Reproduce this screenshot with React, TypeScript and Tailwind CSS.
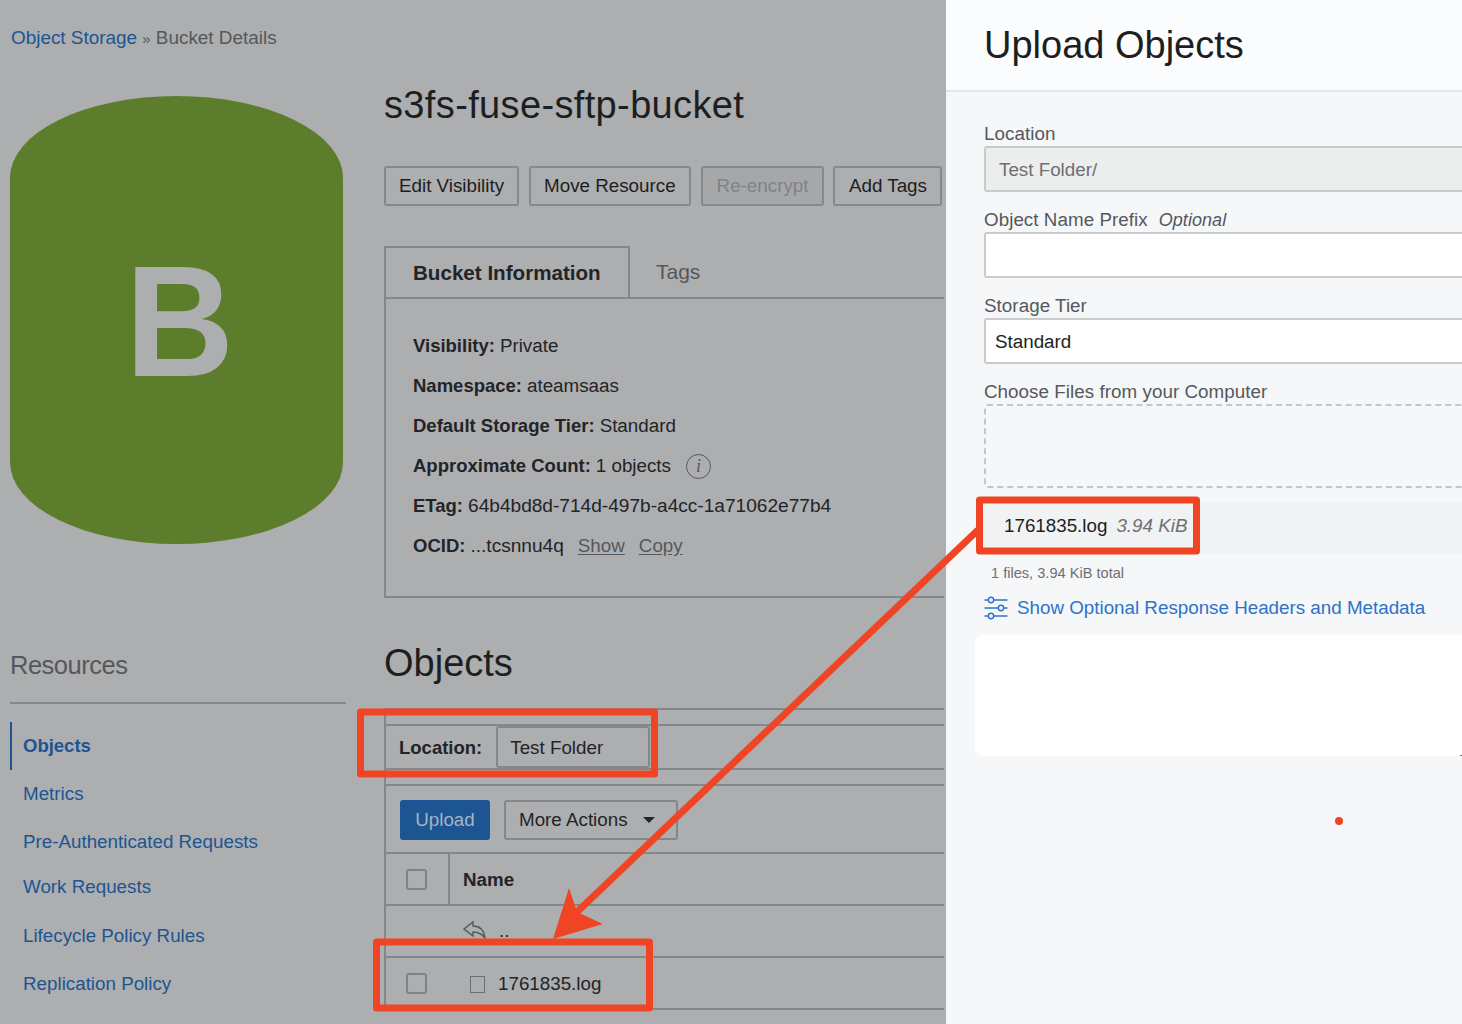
import React from 'react';

const resources = [
  { label: 'Metrics', rowClass: 'h-12' },
  { label: 'Pre-Authenticated Requests', rowClass: 'h-[47px] pt-[2px]' },
  { label: 'Work Requests', rowClass: 'h-[47px] pb-[2px]' },
  { label: 'Lifecycle Policy Rules', rowClass: 'h-12' },
  { label: 'Replication Policy', rowClass: 'h-12' },
  { label: 'Retention Rules', rowClass: 'h-12' },
];

const infoRows = [
  { label: 'Visibility:', value: 'Private' },
  { label: 'Namespace:', value: 'ateamsaas' },
  { label: 'Default Storage Tier:', value: 'Standard' },
];

function ActionButton({ label, disabled, wide }: { label: string; disabled?: boolean; wide?: boolean }) {
  if (disabled) {
    return (
      <button
        type="button"
        className="h-10 shrink-0 rounded-[3px] border-2 border-[#83898e] bg-[#a6a7a9] px-[14px] text-[18.8px] whitespace-nowrap text-[#808285]"
      >
        {label}
      </button>
    );
  }
  return (
    <button
      type="button"
      className={
        wide
          ? '-ml-[1px] h-10 shrink-0 rounded-[3px] border-2 border-[#83898e] px-[13.5px] text-[18.8px] whitespace-nowrap text-[#1d1e20]'
          : 'h-10 shrink-0 rounded-[3px] border-2 border-[#83898e] px-[13px] text-[18.8px] whitespace-nowrap text-[#1d1e20]'
      }
    >
      {label}
    </button>
  );
}

function Sidebar() {
  return (
    <aside className="flex w-[346px] shrink-0 flex-col">
      <div className="mt-[96px] ml-[10px] flex h-[448px] w-[333px] items-center justify-center rounded-[167px/82px] bg-[#5c7d2b] pt-[3px] pl-[6px]">
        <span className="scale-x-[0.96] text-[157px] leading-none font-bold text-[#adaeb0]">B</span>
      </div>
      <h2 className="mt-[103px] ml-[10px] text-[25.5px] leading-9 font-light tracking-[-0.5px] text-[#55585b]">Resources</h2>
      <div className="mt-[19px] ml-[10px] h-[2px] bg-[#85898d]" />
      <nav className="mt-[18px] ml-[10px] flex flex-col text-[18.8px] text-[#1c5592]">
        <a className="flex h-12 items-center border-l-2 border-[#1c5592] pl-[11px] text-[18.5px] font-bold">Objects</a>
        {resources.map((item) => (
          <a key={item.label} className={`flex items-center pl-[13px] ${item.rowClass}`}>
            {item.label}
          </a>
        ))}
      </nav>
    </aside>
  );
}

function BucketInfo() {
  return (
    <div className="flex flex-col">
      <div className="flex h-[53px]">
        <div className="flex w-[246px] items-center border-2 border-[#83888c] pt-[2px] pl-[27px] text-[20.6px] font-bold text-[#232427]">
          Bucket Information
        </div>
        <div className="flex flex-1 items-center border-b-2 border-[#83888c] pl-[26px] text-[21px] text-[#55585b]">Tags</div>
      </div>
      <div className="flex h-[299px] flex-col border-b-2 border-l-2 border-[#83888c] pt-[27px] pl-[27px] text-[18.8px] text-[#232427]">
        {infoRows.map((row) => (
          <p key={row.label} className="flex h-10 items-center gap-[5px]">
            <b className="text-[18.5px]">{row.label}</b> {row.value}
          </p>
        ))}
        <p className="flex h-10 items-center gap-[5px]">
          <b className="text-[18.5px]">Approximate Count:</b> 1 objects
          <span className="ml-[10px] flex h-[25px] w-[25px] items-center justify-center rounded-full border border-[#55585b] font-['Liberation_Serif',serif] text-[18px] italic text-[#55585b]">
            i
          </span>
        </p>
        <p className="flex h-10 items-center gap-[5px]">
          <b className="text-[18.5px]">ETag:</b> <span className="text-[19.1px]">64b4bd8d-714d-497b-a4cc-1a71062e77b4</span>
        </p>
        <p className="flex h-10 items-center gap-[5px]">
          <b className="text-[18.5px]">OCID:</b> <span className="text-[19.1px]">...tcsnnu4q</span>
          <a className="ml-[9px] text-[#55585b] underline underline-offset-2">Show</a>
          <a className="ml-[9px] text-[#55585b] underline underline-offset-2">Copy</a>
        </p>
      </div>
    </div>
  );
}

function ObjectsTable() {
  return (
    <div className="mt-[23px] flex flex-col border-l-2 border-[#83888c] text-[18.8px] text-[#232427]">
      <div className="h-4 border-t-2 border-[#83888c]" />
      <div className="flex h-[46px] items-stretch border-y-2 border-[#83888c] pl-[13px]">
        <b className="self-center pt-[2px] text-[18.5px]">Location:</b>
        <div className="ml-[14px] flex w-[154px] items-center rounded-[3px] border-2 border-[#83888c] pt-[2px] pl-[12px]">Test Folder</div>
      </div>
      <div className="h-[14px]" />
      <div className="flex h-[70px] items-center gap-[14px] border-y-2 border-[#83888c] pt-[2px] pl-[14px]">
        <button type="button" className="h-10 w-[90px] rounded-[3px] bg-[#1c5592] text-[#a4b4c6]">
          Upload
        </button>
        <button type="button" className="flex h-10 w-[174px] items-center rounded-[3px] border-2 border-[#83888c] pl-[13px]">
          More Actions
          <span className="ml-[15px] h-0 w-0 border-x-[6px] border-t-[6px] border-x-transparent border-t-[#232427]" />
        </button>
      </div>
      <div className="flex h-[52px] items-stretch border-b-2 border-[#83888c]">
        <div className="flex w-[64px] items-center border-r-2 border-[#83888c] pl-[20px]">
          <span className="h-[21px] w-[21px] rounded-[3px] border-2 border-[#7d8286]" />
        </div>
        <b className="self-center pt-[2px] pl-[13px] text-[18.8px]">Name</b>
      </div>
      <div className="relative flex h-[52px] items-center border-b-2 border-[#83888c] pl-[113px]">
        <svg className="absolute top-[14px] left-[76px]" width="26" height="22" viewBox="0 0 26 22" fill="none" stroke="#55585b" strokeWidth="1.4">
          <path d="M2 9 L11 2 V6 C18 6 22 10 23 18 C20 14 16 12 11 12 V16 Z" />
        </svg>
        <span>..</span>
      </div>
      <div className="flex h-[52px] items-center border-b-2 border-[#83888c] pl-[20px]">
        <span className="h-[21px] w-[21px] rounded-[3px] border-2 border-[#7d8286]" />
        <span className="mt-[2px] ml-[43px] h-[17px] w-[15px] border border-[#6d7073]" />
        <span className="ml-[13px] pt-[2px]">1761835.log</span>
      </div>
    </div>
  );
}

function BucketDetails() {
  return (
    <div className="relative h-full w-[946px] shrink-0 overflow-hidden bg-[#adaeb0] font-['Liberation_Sans',Arial,sans-serif]">
      <p className="absolute top-[26px] left-[11px] text-[18.9px] leading-6 text-[#55585b]">
        <a className="text-[#1c5592]">Object Storage</a> <span className="text-[15px]">»</span> Bucket Details
      </p>
      <div className="flex">
        <Sidebar />
        <main className="ml-[38px] flex w-[560px] shrink-0 flex-col">
          <h1 className="mt-[83px] text-[38px] leading-[44px] tracking-[0.36px] text-[#1d1e20]">s3fs-fuse-sftp-bucket</h1>
          <div className="mt-[39px] flex gap-[10px]">
            <ActionButton label="Edit Visibility" />
            <ActionButton label="Move Resource" />
            <ActionButton label="Re-encrypt" disabled />
            <ActionButton label="Add Tags" wide />
          </div>
          <div className="mt-[40px]">
            <BucketInfo />
          </div>
          <h2 className="mt-[43px] text-[38px] leading-[44px] text-[#1d1e20]">Objects</h2>
          <ObjectsTable />
        </main>
      </div>
    </div>
  );
}

function Field({ label, hint, children }: { label: string; hint?: string; children: React.ReactNode }) {
  return (
    <div className="flex flex-col">
      <label className="h-[24px] text-[18.8px] leading-[24px] tracking-[0.05px] text-[#55585c]">
        {label}
        {hint ? <i className="ml-[11px] text-[18px]">{hint}</i> : null}
      </label>
      {children}
    </div>
  );
}

function UploadPanel() {
  return (
    <section className="relative h-full flex-1 overflow-hidden bg-[#f5f7f9] font-['Liberation_Sans',Arial,sans-serif]">
      <header className="flex h-[92px] items-start border-b-2 border-[#e3e5e8] bg-[#fbfcfd] pt-[23px] pl-[38px]">
        <h2 className="text-[38px] leading-[44px] text-[#1d1e20]">Upload Objects</h2>
      </header>
      <div className="flex flex-col pt-[30px] pl-[38px]">
        <Field label="Location">
          <div className="flex h-[46px] w-[600px] items-center rounded-l-[3px] border-2 border-[#c8cacc] bg-[#eceded] pt-[2px] pl-[13px] text-[18.8px] text-[#6d7073]">
            Test Folder/
          </div>
        </Field>
        <div className="mt-[16px]">
          <Field label="Object Name Prefix" hint="Optional">
            <div className="h-[46px] w-[600px] rounded-l-[3px] border-2 border-[#c8cacc] bg-white" />
          </Field>
        </div>
        <div className="mt-[16px]">
          <Field label="Storage Tier">
            <div className="flex h-[46px] w-[600px] items-center rounded-l-[3px] border-2 border-[#c8cacc] bg-white pt-[2px] pl-[9px] text-[18.8px] text-[#1d1e20]">
              Standard
            </div>
          </Field>
        </div>
        <div className="mt-[16px]">
          <Field label="Choose Files from your Computer">
            <div className="h-[84px] w-[600px] rounded-[3px] border-2 border-dashed border-[#c4c6c9]" />
          </Field>
        </div>
      </div>
      <div className="mt-[14px] ml-[32px] flex h-[52px] items-center bg-[#f1f2f4] pb-[4px] pl-[26px] text-[18.8px]">
        <span className="text-[#1d1e20]">1761835.log</span>
        <i className="ml-[9px] text-[#6d7073]">3.94 KiB</i>
      </div>
      <p className="mt-[10px] ml-[45px] text-[14.6px] leading-[18px] text-[#6d7073]">1 files, 3.94 KiB total</p>
      <div className="mt-[14px] ml-[38px] flex items-center gap-[9px] text-[18.8px] leading-6 text-[#2d73c9]">
        <svg width="24" height="24" viewBox="0 0 24 24" fill="none" stroke="#2d73c9" strokeWidth="1.4">
          <circle cx="7" cy="4" r="2.7" />
          <circle cx="17" cy="12" r="2.7" />
          <circle cx="7" cy="20" r="2.7" />
          <path d="M0.5 4 H4.3 M9.7 4 H23.5 M0.5 12 H14.3 M19.7 12 H23.5 M0.5 20 H4.3 M9.7 20 H23.5" />
        </svg>
        Show Optional Response Headers and Metadata
      </div>
      <div className="relative mt-[15px] ml-[29px] h-[121px] rounded-l-[8px] bg-white">
        <span className="absolute right-0 bottom-0 h-[1px] w-[2px] bg-[#2d73c9]" />
      </div>
    </section>
  );
}

function Annotations() {
  return (
    <svg className="pointer-events-none absolute inset-0" width="1462" height="1024" viewBox="0 0 1462 1024" fill="none">
      <g stroke="#f04525" strokeWidth="7" strokeLinejoin="round">
        <rect x="360.5" y="712" width="294" height="62" />
        <rect x="376.5" y="942" width="273" height="66" />
        <rect x="979.5" y="500" width="217" height="51" />
        <path d="M978 530 L577 912" />
      </g>
      <path d="M553 939 L569 888 L577 912 L603 924 Z" fill="#f04525" />
      <circle cx="1339" cy="821" r="4" fill="#f04525" />
    </svg>
  );
}

export default function App() {
  return (
    <div className="relative flex h-[1024px] w-[1462px] overflow-hidden">
      <BucketDetails />
      <UploadPanel />
      <Annotations />
    </div>
  );
}
